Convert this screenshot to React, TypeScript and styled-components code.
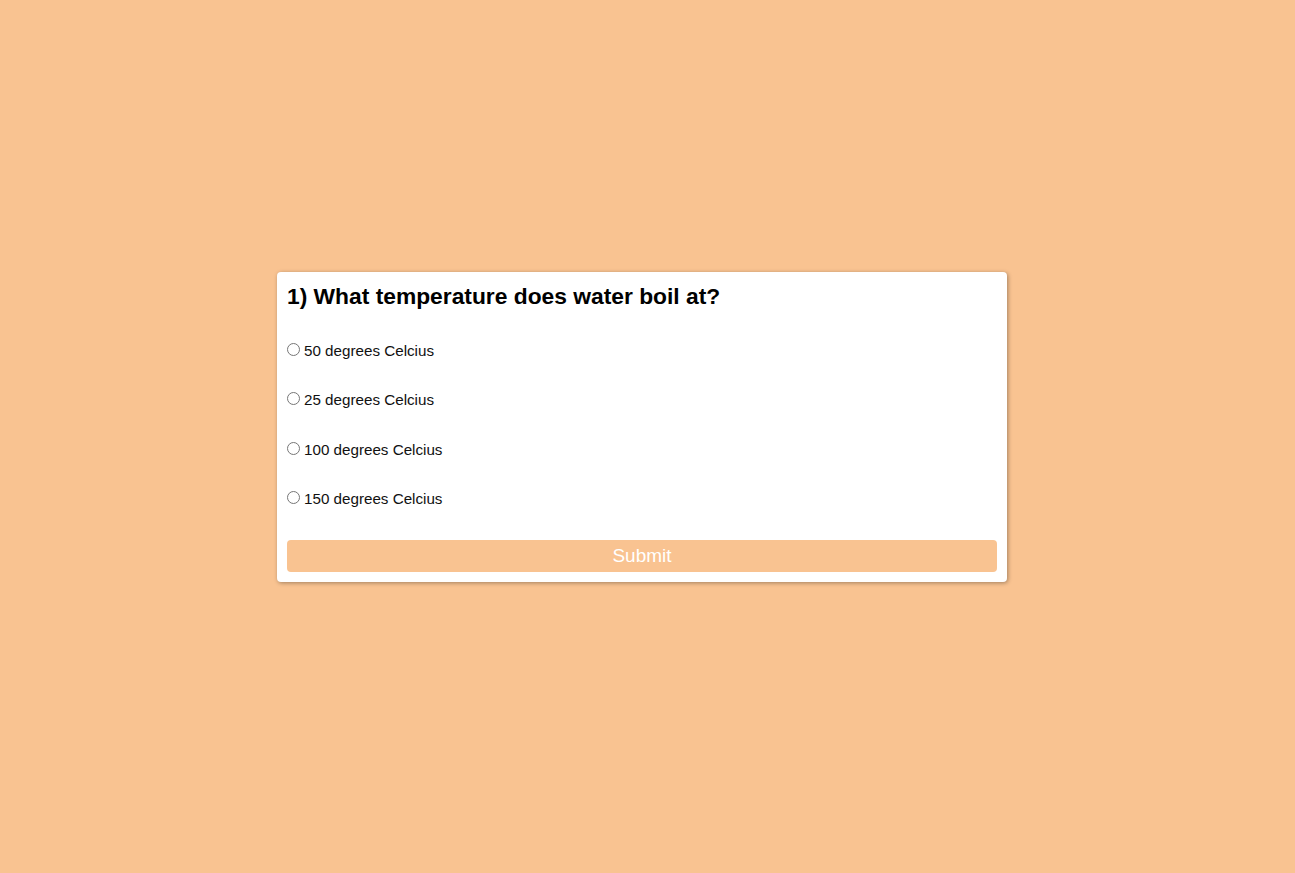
import React, { useState } from "react";
import styled, { createGlobalStyle } from "styled-components";

const options = [
	"50 degrees Celcius",
	"25 degrees Celcius",
	"100 degrees Celcius",
	"150 degrees Celcius",
];

const GlobalStyle = createGlobalStyle`
	html, body {
		margin: 0;
		padding: 0;
		background: #f9c391;
	}

	* {
		box-sizing: border-box;
	}
`;

const App = () => {
	const [answer, setAnswer] = useState<string | null>(null);

	return (
		<Page>
			<GlobalStyle />
			<Card>
				<Question>1) What temperature does water boil at?</Question>
				<Options>
					{options.map((option) => (
						<Option key={option}>
							<Radio
								type="radio"
								name="answer"
								checked={answer === option}
								onChange={() => setAnswer(option)}
							/>
							{option}
						</Option>
					))}
				</Options>
				<SubmitButton type="button">Submit</SubmitButton>
			</Card>
		</Page>
	);
};

const Page = styled.main`
	min-height: 100vh;
	display: flex;
	align-items: center;
	justify-content: center;
	padding: 0 11px 19px 0;
	font-family: "Liberation Sans", Arial, sans-serif;
`;

const Card = styled.section`
	width: 730px;
	background: #ffffff;
	border-radius: 4px;
	box-shadow: 1px 1px 4px rgba(0, 0, 0, 0.35);
	padding: 10px;
	display: flex;
	flex-direction: column;
`;

const Question = styled.h2`
	margin: 0;
	font-size: 22.8px;
	line-height: 29px;
	font-weight: bold;
	color: #000000;
`;

const Options = styled.div`
	display: flex;
	flex-direction: column;
	gap: 31.6px;
	margin: 30px 0 32px;
`;

const Option = styled.label`
	display: flex;
	align-items: center;
	height: 18px;
	font-size: 15.2px;
	color: #111111;
	cursor: pointer;
`;

const Radio = styled.input`
	width: 13px;
	height: 13px;
	margin: 0 4px 2px 0;
`;

const SubmitButton = styled.button`
	height: 32px;
	width: 100%;
	border: none;
	border-radius: 4px;
	background: #f9c391;
	color: #ffffff;
	font-family: "Liberation Sans", Arial, sans-serif;
	font-size: 19px;
	cursor: pointer;
`;

export default App;
